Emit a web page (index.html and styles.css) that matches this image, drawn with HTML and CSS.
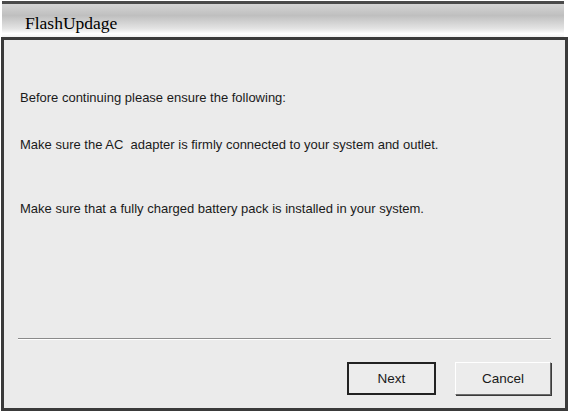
FILE: index.html
```html
<!DOCTYPE html>
<html lang="en">
<head>
    <meta charset="UTF-8">
    <title>FlashUpdage</title>
    <link rel="stylesheet" href="styles.css">
</head>
<body>
    <div class="window">
        <div class="titlebar">FlashUpdage</div>
        <div class="content">
            <div class="messages">
                <p class="msg first">Before continuing please ensure the following:</p>
                <p class="msg second">Make sure the AC&nbsp; adapter is firmly connected to your system and outlet.</p>
                <p class="msg third">Make sure that a fully charged battery pack is installed in your system.</p>
            </div>
            <div class="separator"></div>
            <div class="button-row">
                <button class="btn default">Next</button>
                <button class="btn">Cancel</button>
            </div>
        </div>
    </div>
</body>
</html>
```

FILE: styles.css
```css
body {
    margin: 0;
    background: #ffffff;
    font-family: "Liberation Sans", Arial, sans-serif;
    width: 571px;
    height: 416px;
    overflow: hidden;
}
.window {
    margin: 1px 3px 0 1px;
    display: flex;
    flex-direction: column;
    height: 410px;
}
.titlebar {
    height: 33px;
    border-top: 3px solid #4a4a4a;
    margin: 0 4px 0 1px;
    background: linear-gradient(to bottom, #d4d4d4 0%, #bfbfbf 35%, #e4e4e4 75%, #ffffff 90%, #f0f0f0 100%);
    font-family: "Liberation Serif", "Times New Roman", serif;
    font-size: 17.5px;
    color: #000;
    padding-left: 23px;
    line-height: 38px;
}
.content {
    flex: 1;
    background: #ebebeb;
    border: 3px solid #3a3a3a;
    display: flex;
    flex-direction: column;
}
.messages {
    flex: 1;
    padding: 50px 0 0 16px;
}
.msg {
    margin: 0;
    font-size: 13px;
    color: #1a1a1a;
    line-height: 16px;
}
.second {
    margin-top: 31px;
}
.third {
    margin-top: 48px;
}
.separator {
    margin: 0 14px;
    height: 1px;
    background: #8a8a8a;
    border-bottom: 1px solid #ffffff;
}
.button-row {
    display: flex;
    justify-content: flex-end;
    gap: 19px;
    padding: 22px 14px 13px 0;
}
.btn {
    font-family: "Liberation Sans", Arial, sans-serif;
    font-size: 13.5px;
    color: #1a1a1a;
    background: #ececec;
    border: 1px solid;
    border-color: #ffffff #6a6a6a #6a6a6a #ffffff;
    box-shadow: 1px 1px 0 #3a3a3a;
    width: 96px;
    height: 33px;
    padding: 0;
}
.btn.default {
    width: 89px;
    border: 2px solid #222;
    box-shadow: none;
}
```
